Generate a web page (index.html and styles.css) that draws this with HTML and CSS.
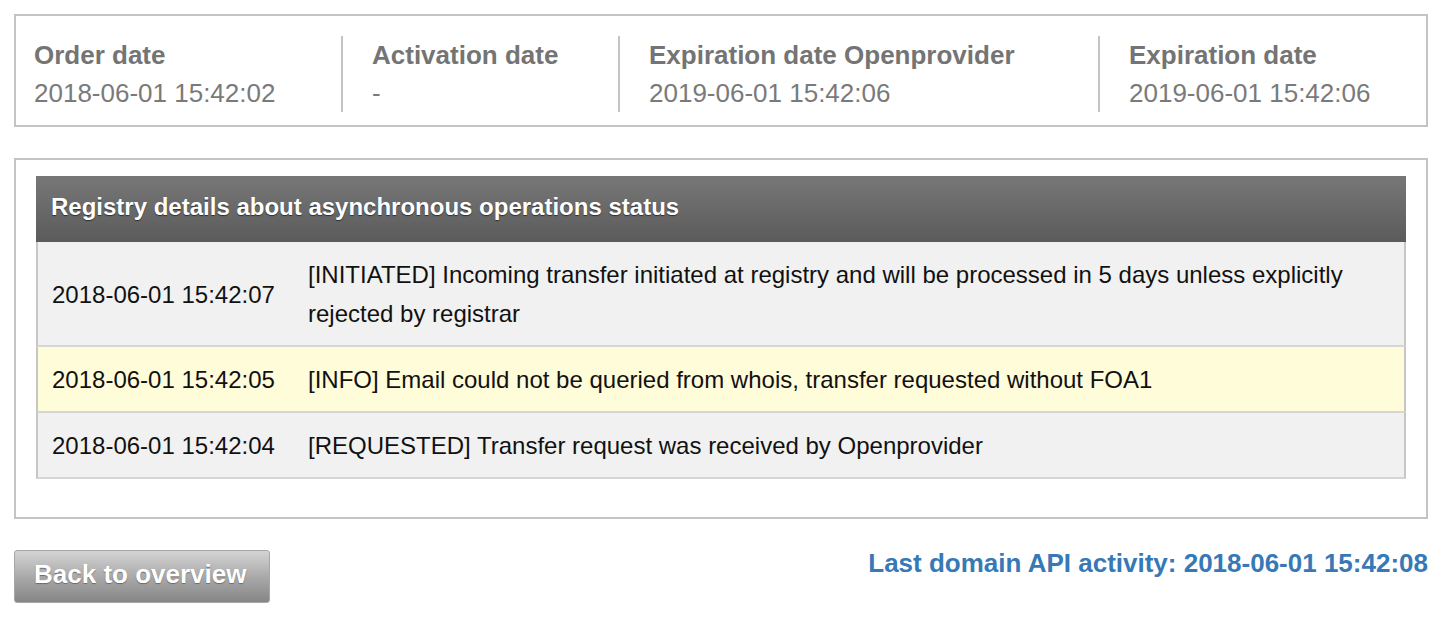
FILE: index.html
```html
<!DOCTYPE html>
<html lang="en">
<head>
<meta charset="utf-8">
<title>Domain details</title>
<link rel="stylesheet" href="styles.css">
</head>
<body>
<div class="page">
  <section class="dates">
    <div class="date-cell first">
      <div class="label">Order date</div>
      <div class="value">2018-06-01 15:42:02</div>
    </div>
    <div class="date-cell">
      <div class="label">Activation date</div>
      <div class="value">-</div>
    </div>
    <div class="date-cell">
      <div class="label">Expiration date Openprovider</div>
      <div class="value">2019-06-01 15:42:06</div>
    </div>
    <div class="date-cell">
      <div class="label">Expiration date</div>
      <div class="value">2019-06-01 15:42:06</div>
    </div>
  </section>

  <section class="panel">
    <div class="status-table">
      <div class="status-head">Registry details about asynchronous operations status</div>
      <div class="status-row">
        <div class="cell-date">2018-06-01 15:42:07</div>
        <div class="cell-msg">[INITIATED] Incoming transfer initiated at registry and will be processed in 5 days unless explicitly rejected by registrar</div>
      </div>
      <div class="status-row info">
        <div class="cell-date">2018-06-01 15:42:05</div>
        <div class="cell-msg">[INFO] Email could not be queried from whois, transfer requested without FOA1</div>
      </div>
      <div class="status-row">
        <div class="cell-date">2018-06-01 15:42:04</div>
        <div class="cell-msg">[REQUESTED] Transfer request was received by Openprovider</div>
      </div>
    </div>
  </section>

  <footer class="footer">
    <button class="back-btn" type="button">Back to overview</button>
    <div class="last-activity">Last domain API activity: 2018-06-01 15:42:08</div>
  </footer>
</div>
</body>
</html>
```

FILE: styles.css
```css
html, body {
  margin: 0;
  padding: 0;
  background: #ffffff;
}

body {
  font-family: "Liberation Sans", Arial, Helvetica, sans-serif;
}

.page {
  width: 1414px;
  margin: 14px 0 0 14px;
}

/* Top dates box */
.dates {
  display: grid;
  grid-template-columns: 325px 277px 480px 328px;
  border: 2px solid #c4c4c4;
  padding: 20px 0 13px 0;
  font-size: 26px;
  line-height: 38px;
  color: #777777;
}

.date-cell {
  border-left: 2px solid #c4c4c4;
  padding-left: 29px;
  white-space: nowrap;
}

.date-cell.first {
  border-left: none;
  padding-left: 18px;
}

.label {
  font-weight: bold;
  color: #747474;
}

.value {
  color: #7a7a7a;
}

/* Status panel */
.panel {
  margin-top: 31px;
  border: 2px solid #c4c4c4;
  padding: 16px 20px 38px 20px;
}

.status-table {
  font-size: 24px;
  color: #111111;
}

.status-head {
  background: linear-gradient(to bottom, #777777 0%, #5b5b5b 100%);
  color: #ffffff;
  font-weight: bold;
  line-height: 30px;
  padding: 16px 15px 20px 15px;
  text-shadow: 0 1px 1px #2e2e2e;
}

.status-row {
  display: grid;
  grid-template-columns: 256px 1fr;
  align-items: center;
  background: #f1f1f1;
  border-left: 2px solid #c6c6c6;
  border-right: 2px solid #c6c6c6;
  border-bottom: 2px solid #d6d6d6;
  line-height: 39px;
}

.status-row.info {
  background: #fffcda;
}

.cell-date {
  padding: 13px 14px 12px 14px;
  white-space: nowrap;
}

.cell-msg {
  padding: 13px 14px 12px 14px;
}

/* Footer */
.footer {
  margin-top: 31px;
  display: flex;
  justify-content: space-between;
  align-items: flex-start;
}

.back-btn {
  width: 256px;
  height: 53px;
  box-sizing: border-box;
  border: 1px solid #a7a7a7;
  border-radius: 3px;
  background: linear-gradient(to bottom, #d4d4d4 0%, #a6a6a6 55%, #868686 100%);
  color: #ffffff;
  font-family: "Liberation Sans", Arial, Helvetica, sans-serif;
  font-size: 26px;
  font-weight: bold;
  line-height: 30px;
  padding: 8px 0 13px 19px;
  text-align: left;
  text-shadow: 0 1px 1px #6a6a6a;
  cursor: pointer;
}

.last-activity {
  font-size: 26px;
  font-weight: bold;
  line-height: 26px;
  color: #3779b6;
  white-space: nowrap;
}
```
